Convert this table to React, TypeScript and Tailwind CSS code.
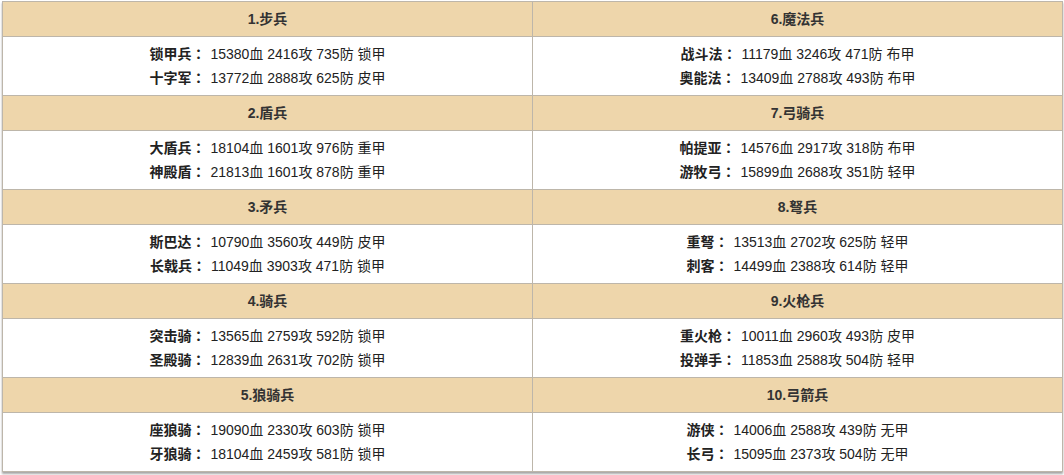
import React from 'react';

type Unit = { name: string; stats: string };
type Group = { title: string; units: Unit[] };

const LEFT: Group[] = [
  { title: '1.步兵', units: [
    { name: '锁甲兵', stats: '15380血 2416攻 735防 锁甲' },
    { name: '十字军', stats: '13772血 2888攻 625防 皮甲' },
  ] },
  { title: '2.盾兵', units: [
    { name: '大盾兵', stats: '18104血 1601攻 976防 重甲' },
    { name: '神殿盾', stats: '21813血 1601攻 878防 重甲' },
  ] },
  { title: '3.矛兵', units: [
    { name: '斯巴达', stats: '10790血 3560攻 449防 皮甲' },
    { name: '长戟兵', stats: '11049血 3903攻 471防 锁甲' },
  ] },
  { title: '4.骑兵', units: [
    { name: '突击骑', stats: '13565血 2759攻 592防 锁甲' },
    { name: '圣殿骑', stats: '12839血 2631攻 702防 锁甲' },
  ] },
  { title: '5.狼骑兵', units: [
    { name: '座狼骑', stats: '19090血 2330攻 603防 锁甲' },
    { name: '牙狼骑', stats: '18104血 2459攻 581防 锁甲' },
  ] },
];

const RIGHT: Group[] = [
  { title: '6.魔法兵', units: [
    { name: '战斗法', stats: '11179血 3246攻 471防 布甲' },
    { name: '奥能法', stats: '13409血 2788攻 493防 布甲' },
  ] },
  { title: '7.弓骑兵', units: [
    { name: '帕提亚', stats: '14576血 2917攻 318防 布甲' },
    { name: '游牧弓', stats: '15899血 2688攻 351防 轻甲' },
  ] },
  { title: '8.弩兵', units: [
    { name: '重弩', stats: '13513血 2702攻 625防 轻甲' },
    { name: '刺客', stats: '14499血 2388攻 614防 轻甲' },
  ] },
  { title: '9.火枪兵', units: [
    { name: '重火枪', stats: '10011血 2960攻 493防 皮甲' },
    { name: '投弹手', stats: '11853血 2588攻 504防 轻甲' },
  ] },
  { title: '10.弓箭兵', units: [
    { name: '游侠', stats: '14006血 2588攻 439防 无甲' },
    { name: '长弓', stats: '15095血 2373攻 504防 无甲' },
  ] },
];

function Header({ title }: { title: string }) {
  return (
    <div className="h-[35px] flex items-center justify-center bg-[#eed6ab] border-r border-b border-[#bdb6aa] font-bold text-[#333]">
      {title}
    </div>
  );
}

function Body({ units }: { units: Unit[] }) {
  return (
    <div className="h-[59px] flex flex-col items-center justify-center bg-white border-r border-b border-[#bdb6aa] leading-[23px] text-[#222]">
      {units.map((u) => (
        <div key={u.name}>
          <span className="font-bold">
            {u.name}
            <span className="font-['Noto_Sans_CJK_TC',sans-serif] mr-[5px]">：</span>
          </span>
          {u.stats}
        </div>
      ))}
    </div>
  );
}

export default function App() {
  return (
    <div className="w-[1064px] h-[475px] bg-white pt-[1px] pl-[2px]" style={{ fontFamily: '"Liberation Sans", "Noto Sans CJK SC", sans-serif' }}>
      <div className="w-[1061px] grid grid-cols-2 border-l border-t border-[#bdb6aa] text-[14px] shadow-[0_2px_2px_rgba(0,0,0,0.35)]">
        {LEFT.map((g, i) => (
          <React.Fragment key={g.title}>
            <Header title={g.title} />
            <Header title={RIGHT[i].title} />
            <Body units={g.units} />
            <Body units={RIGHT[i].units} />
          </React.Fragment>
        ))}
      </div>
    </div>
  );
}
